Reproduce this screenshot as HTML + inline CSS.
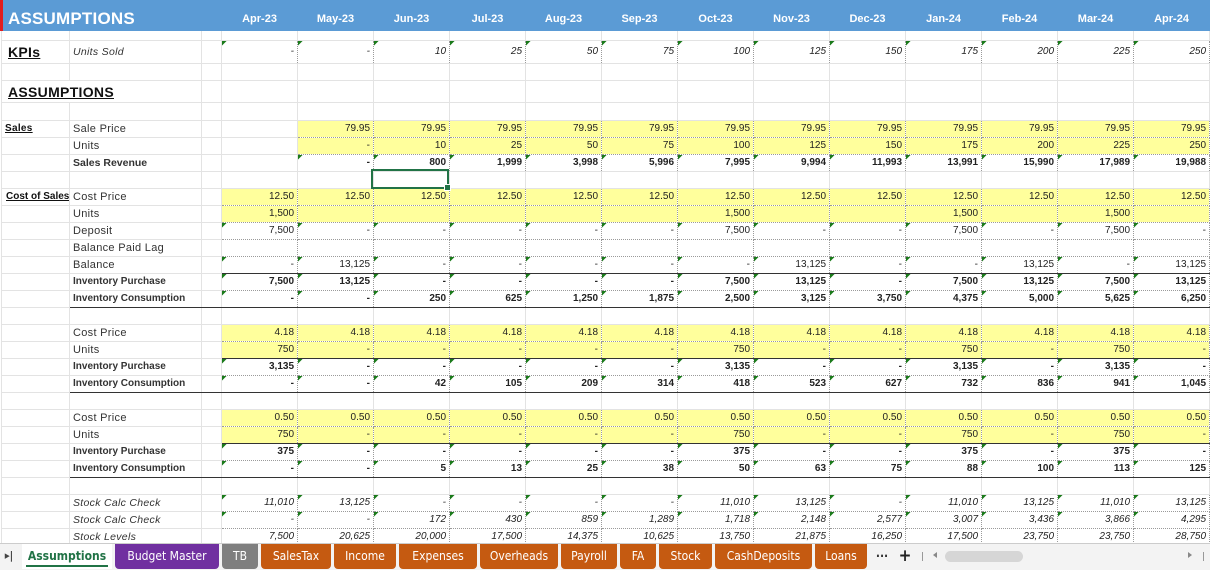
<!DOCTYPE html>
<html><head><meta charset="utf-8"><style>
body{margin:0;width:1210px;height:569px;overflow:hidden;background:#fff;font-family:"Liberation Sans",Arial,sans-serif;position:relative}
table{border-collapse:collapse;table-layout:fixed;position:absolute;left:0;top:0;width:1208px}
td{border:1px solid #e3e3e3;padding:0 3px;white-space:nowrap;overflow:hidden;font-size:10px;color:#222;text-align:right;line-height:14px}
td.l{text-align:left;font-size:11px;color:#333;letter-spacing:.3px}
tr.h td{background:#5b9bd5;border-color:#5b9bd5;color:#fff;font-weight:bold;font-size:11px;text-align:center;vertical-align:bottom;padding-bottom:4px}
tr.h td.big{font-size:17px;text-align:left;padding-left:5px;border-left:3px solid #e21d1d;letter-spacing:.2px}
td.d{border:1px dotted #9a9a9a;background-image:linear-gradient(135deg,#1a7a1a 3px,transparent 3.5px);background-repeat:no-repeat}
td.y{background-color:#ffff9c}
td.n{border:1px dotted #9a9a9a}
tr.i td.d,tr.i td.n{font-style:italic}
tr.b td{font-weight:bold}
tr.b td.l{letter-spacing:0}
tr.tl td.k{border-top:1.5px solid #333}
tr.bl td.k{border-bottom:1.5px solid #333}
.u{text-decoration:underline;font-weight:bold;color:#111}
.sel{position:absolute;left:371px;top:169px;width:74px;height:16px;border:2px solid #217346}
.sel:after{content:"";position:absolute;right:-4px;bottom:-4px;width:5px;height:5px;background:#217346;border:1px solid #fff}
.tabs{position:absolute;left:0;top:543px;width:1210px;height:26px;background:#f3f3f3;border-top:1px solid #ccc}
.tab{position:absolute;top:0;height:25px;line-height:24px;color:#fff;font-family:"DejaVu Sans Condensed","Liberation Sans",sans-serif;font-size:12px;text-align:center;border-radius:0 0 4px 4px}
.o{background:#c55a11}
</style></head><body>
<table>
<colgroup><col style="width:68px"><col style="width:132px"><col style="width:20px"><col style="width:76px"><col style="width:76px"><col style="width:76px"><col style="width:76px"><col style="width:76px"><col style="width:76px"><col style="width:76px"><col style="width:76px"><col style="width:76px"><col style="width:76px"><col style="width:76px"><col style="width:76px"><col style="width:76px"></colgroup>
<tr class="h" style="height:30px"><td class="big" colspan="3">ASSUMPTIONS</td><td>Apr-23</td><td>May-23</td><td>Jun-23</td><td>Jul-23</td><td>Aug-23</td><td>Sep-23</td><td>Oct-23</td><td>Nov-23</td><td>Dec-23</td><td>Jan-24</td><td>Feb-24</td><td>Mar-24</td><td>Apr-24</td></tr>
<tr style="height:10px"><td></td><td></td><td></td><td></td><td></td><td></td><td></td><td></td><td></td><td></td><td></td><td></td><td></td><td></td><td></td><td></td></tr>
<tr class="i" style="height:23px"><td class="l" style="font-size:14px;padding-left:6px"><span class="u">KPIs</span></td><td class="l" style="font-style:italic;font-size:10.5px">Units Sold</td><td></td><td class="d">-</td><td class="d">-</td><td class="d">10</td><td class="d">25</td><td class="d">50</td><td class="d">75</td><td class="d">100</td><td class="d">125</td><td class="d">150</td><td class="d">175</td><td class="d">200</td><td class="d">225</td><td class="d">250</td></tr>
<tr style="height:17px"><td></td><td></td><td></td><td></td><td></td><td></td><td></td><td></td><td></td><td></td><td></td><td></td><td></td><td></td><td></td><td></td></tr>
<tr style="height:22px"><td class="l" colspan="2" style="font-size:14px;padding-left:6px"><span class="u">ASSUMPTIONS</span></td><td></td><td></td><td></td><td></td><td></td><td></td><td></td><td></td><td></td><td></td><td></td><td></td><td></td><td></td></tr>
<tr style="height:18px"><td></td><td></td><td></td><td></td><td></td><td></td><td></td><td></td><td></td><td></td><td></td><td></td><td></td><td></td><td></td><td></td></tr>
<tr style="height:17px"><td class="l" style="font-size:10px"><span class="u">Sales</span></td><td class="l">Sale Price</td><td></td><td></td><td class="n y">79.95</td><td class="n y">79.95</td><td class="n y">79.95</td><td class="n y">79.95</td><td class="n y">79.95</td><td class="n y">79.95</td><td class="n y">79.95</td><td class="n y">79.95</td><td class="n y">79.95</td><td class="n y">79.95</td><td class="n y">79.95</td><td class="n y">79.95</td></tr>
<tr style="height:17px"><td></td><td class="l">Units</td><td></td><td></td><td class="n y">-</td><td class="n y">10</td><td class="n y">25</td><td class="n y">50</td><td class="n y">75</td><td class="n y">100</td><td class="n y">125</td><td class="n y">150</td><td class="n y">175</td><td class="n y">200</td><td class="n y">225</td><td class="n y">250</td></tr>
<tr class="b" style="height:17px"><td></td><td class="l" style="font-size:10.5px">Sales Revenue</td><td></td><td></td><td class="d">-</td><td class="d">800</td><td class="d">1,999</td><td class="d">3,998</td><td class="d">5,996</td><td class="d">7,995</td><td class="d">9,994</td><td class="d">11,993</td><td class="d">13,991</td><td class="d">15,990</td><td class="d">17,989</td><td class="d">19,988</td></tr>
<tr style="height:17px"><td></td><td></td><td></td><td></td><td></td><td></td><td></td><td></td><td></td><td></td><td></td><td></td><td></td><td></td><td></td><td></td></tr>
<tr style="height:17px"><td class="l" style="font-size:10px;padding-left:4px;letter-spacing:0"><span class="u">Cost of Sales</span></td><td class="l">Cost Price</td><td></td><td class="n y">12.50</td><td class="n y">12.50</td><td class="n y">12.50</td><td class="n y">12.50</td><td class="n y">12.50</td><td class="n y">12.50</td><td class="n y">12.50</td><td class="n y">12.50</td><td class="n y">12.50</td><td class="n y">12.50</td><td class="n y">12.50</td><td class="n y">12.50</td><td class="n y">12.50</td></tr>
<tr style="height:17px"><td></td><td class="l">Units</td><td></td><td class="n y">1,500</td><td class="n y"></td><td class="n y"></td><td class="n y"></td><td class="n y"></td><td class="n y"></td><td class="n y">1,500</td><td class="n y"></td><td class="n y"></td><td class="n y">1,500</td><td class="n y"></td><td class="n y">1,500</td><td class="n y"></td></tr>
<tr style="height:17px"><td></td><td class="l">Deposit</td><td></td><td class="d">7,500</td><td class="d">-</td><td class="d">-</td><td class="d">-</td><td class="d">-</td><td class="d">-</td><td class="d">7,500</td><td class="d">-</td><td class="d">-</td><td class="d">7,500</td><td class="d">-</td><td class="d">7,500</td><td class="d">-</td></tr>
<tr style="height:17px"><td></td><td class="l">Balance Paid Lag</td><td></td><td class="n"></td><td class="n"></td><td class="n"></td><td class="n"></td><td class="n"></td><td class="n"></td><td class="n"></td><td class="n"></td><td class="n"></td><td class="n"></td><td class="n"></td><td class="n"></td><td class="n"></td></tr>
<tr style="height:17px"><td></td><td class="l">Balance</td><td></td><td class="d">-</td><td class="d">13,125</td><td class="d">-</td><td class="d">-</td><td class="d">-</td><td class="d">-</td><td class="d">-</td><td class="d">13,125</td><td class="d">-</td><td class="d">-</td><td class="d">13,125</td><td class="d">-</td><td class="d">13,125</td></tr>
<tr class="b tl" style="height:17px"><td></td><td class="l k" style="font-size:10px">Inventory Purchase</td><td class="k"></td><td class="d k">7,500</td><td class="d k">13,125</td><td class="d k">-</td><td class="d k">-</td><td class="d k">-</td><td class="d k">-</td><td class="d k">7,500</td><td class="d k">13,125</td><td class="d k">-</td><td class="d k">7,500</td><td class="d k">13,125</td><td class="d k">7,500</td><td class="d k">13,125</td></tr>
<tr class="b bl" style="height:17px"><td></td><td class="l k" style="font-size:10px">Inventory Consumption</td><td class="k"></td><td class="d k">-</td><td class="d k">-</td><td class="d k">250</td><td class="d k">625</td><td class="d k">1,250</td><td class="d k">1,875</td><td class="d k">2,500</td><td class="d k">3,125</td><td class="d k">3,750</td><td class="d k">4,375</td><td class="d k">5,000</td><td class="d k">5,625</td><td class="d k">6,250</td></tr>
<tr style="height:17px"><td></td><td></td><td></td><td></td><td></td><td></td><td></td><td></td><td></td><td></td><td></td><td></td><td></td><td></td><td></td><td></td></tr>
<tr style="height:17px"><td></td><td class="l">Cost Price</td><td></td><td class="n y">4.18</td><td class="n y">4.18</td><td class="n y">4.18</td><td class="n y">4.18</td><td class="n y">4.18</td><td class="n y">4.18</td><td class="n y">4.18</td><td class="n y">4.18</td><td class="n y">4.18</td><td class="n y">4.18</td><td class="n y">4.18</td><td class="n y">4.18</td><td class="n y">4.18</td></tr>
<tr style="height:17px"><td></td><td class="l">Units</td><td></td><td class="n y">750</td><td class="n y">-</td><td class="n y">-</td><td class="n y">-</td><td class="n y">-</td><td class="n y">-</td><td class="n y">750</td><td class="n y">-</td><td class="n y">-</td><td class="n y">750</td><td class="n y">-</td><td class="n y">750</td><td class="n y">-</td></tr>
<tr class="b tl" style="height:17px"><td></td><td class="l k" style="font-size:10px">Inventory Purchase</td><td class="k"></td><td class="d k">3,135</td><td class="d k">-</td><td class="d k">-</td><td class="d k">-</td><td class="d k">-</td><td class="d k">-</td><td class="d k">3,135</td><td class="d k">-</td><td class="d k">-</td><td class="d k">3,135</td><td class="d k">-</td><td class="d k">3,135</td><td class="d k">-</td></tr>
<tr class="b bl" style="height:17px"><td></td><td class="l k" style="font-size:10px">Inventory Consumption</td><td class="k"></td><td class="d k">-</td><td class="d k">-</td><td class="d k">42</td><td class="d k">105</td><td class="d k">209</td><td class="d k">314</td><td class="d k">418</td><td class="d k">523</td><td class="d k">627</td><td class="d k">732</td><td class="d k">836</td><td class="d k">941</td><td class="d k">1,045</td></tr>
<tr style="height:17px"><td></td><td></td><td></td><td></td><td></td><td></td><td></td><td></td><td></td><td></td><td></td><td></td><td></td><td></td><td></td><td></td></tr>
<tr style="height:17px"><td></td><td class="l">Cost Price</td><td></td><td class="n y">0.50</td><td class="n y">0.50</td><td class="n y">0.50</td><td class="n y">0.50</td><td class="n y">0.50</td><td class="n y">0.50</td><td class="n y">0.50</td><td class="n y">0.50</td><td class="n y">0.50</td><td class="n y">0.50</td><td class="n y">0.50</td><td class="n y">0.50</td><td class="n y">0.50</td></tr>
<tr style="height:17px"><td></td><td class="l">Units</td><td></td><td class="n y">750</td><td class="n y">-</td><td class="n y">-</td><td class="n y">-</td><td class="n y">-</td><td class="n y">-</td><td class="n y">750</td><td class="n y">-</td><td class="n y">-</td><td class="n y">750</td><td class="n y">-</td><td class="n y">750</td><td class="n y">-</td></tr>
<tr class="b tl" style="height:17px"><td></td><td class="l k" style="font-size:10px">Inventory Purchase</td><td class="k"></td><td class="d k">375</td><td class="d k">-</td><td class="d k">-</td><td class="d k">-</td><td class="d k">-</td><td class="d k">-</td><td class="d k">375</td><td class="d k">-</td><td class="d k">-</td><td class="d k">375</td><td class="d k">-</td><td class="d k">375</td><td class="d k">-</td></tr>
<tr class="b bl" style="height:17px"><td></td><td class="l k" style="font-size:10px">Inventory Consumption</td><td class="k"></td><td class="d k">-</td><td class="d k">-</td><td class="d k">5</td><td class="d k">13</td><td class="d k">25</td><td class="d k">38</td><td class="d k">50</td><td class="d k">63</td><td class="d k">75</td><td class="d k">88</td><td class="d k">100</td><td class="d k">113</td><td class="d k">125</td></tr>
<tr style="height:17px"><td></td><td></td><td></td><td></td><td></td><td></td><td></td><td></td><td></td><td></td><td></td><td></td><td></td><td></td><td></td><td></td></tr>
<tr class="i" style="height:17px"><td></td><td class="l" style="font-style:italic;font-size:10.5px">Stock Calc Check</td><td></td><td class="d">11,010</td><td class="d">13,125</td><td class="d">-</td><td class="d">-</td><td class="d">-</td><td class="d">-</td><td class="d">11,010</td><td class="d">13,125</td><td class="d">-</td><td class="d">11,010</td><td class="d">13,125</td><td class="d">11,010</td><td class="d">13,125</td></tr>
<tr class="i" style="height:17px"><td></td><td class="l" style="font-style:italic;font-size:10.5px">Stock Calc Check</td><td></td><td class="d">-</td><td class="d">-</td><td class="d">172</td><td class="d">430</td><td class="d">859</td><td class="d">1,289</td><td class="d">1,718</td><td class="d">2,148</td><td class="d">2,577</td><td class="d">3,007</td><td class="d">3,436</td><td class="d">3,866</td><td class="d">4,295</td></tr>
<tr class="i" style="height:17px"><td></td><td class="l" style="font-style:italic;font-size:10.5px">Stock Levels</td><td></td><td class="n">7,500</td><td class="n">20,625</td><td class="n">20,000</td><td class="n">17,500</td><td class="n">14,375</td><td class="n">10,625</td><td class="n">13,750</td><td class="n">21,875</td><td class="n">16,250</td><td class="n">17,500</td><td class="n">23,750</td><td class="n">23,750</td><td class="n">28,750</td></tr>
</table>
<div class="sel"></div>
<div class="tabs">
<div class="tab" style="left:0;width:18px;color:#444;font-weight:bold;font-size:11px">▸|</div>
<div class="tab" style="left:22px;width:90px;color:#217346;font-weight:bold;background:#fff;border-radius:0">Assumptions<div style="position:absolute;left:4px;right:4px;bottom:2px;height:2px;background:#217346"></div></div>
<div class="tab" style="left:115px;width:104px;background:#7030a0">Budget Master</div>
<div class="tab" style="left:222px;width:36px;background:#7f7f7f">TB</div>
<div class="tab o" style="left:261px;width:70px">SalesTax</div>
<div class="tab o" style="left:334px;width:62px">Income</div>
<div class="tab o" style="left:399px;width:78px">Expenses</div>
<div class="tab o" style="left:480px;width:78px">Overheads</div>
<div class="tab o" style="left:561px;width:56px">Payroll</div>
<div class="tab o" style="left:620px;width:36px">FA</div>
<div class="tab o" style="left:659px;width:53px">Stock</div>
<div class="tab o" style="left:715px;width:97px">CashDeposits</div>
<div class="tab o" style="left:815px;width:52px">Loans</div>
<div class="tab" style="left:872px;width:20px;color:#333;font-weight:bold">···</div>
<div class="tab" style="left:895px;width:20px;color:#222;font-size:17px;font-weight:bold">+</div>
<div style="position:absolute;left:922px;top:8px;width:1px;height:9px;background:#999"></div>
<div style="position:absolute;left:933px;top:8px;width:0;height:0;border:3px solid transparent;border-right:4px solid #888;border-left:0"></div>
<div style="position:absolute;left:945px;top:7px;width:78px;height:11px;border-radius:6px;background:#d6d6d6"></div>
<div style="position:absolute;left:1188px;top:8px;width:0;height:0;border:3px solid transparent;border-left:4px solid #888;border-right:0"></div>
<div style="position:absolute;left:1203px;top:8px;width:1px;height:9px;background:#999"></div>
</div>
</body></html>
